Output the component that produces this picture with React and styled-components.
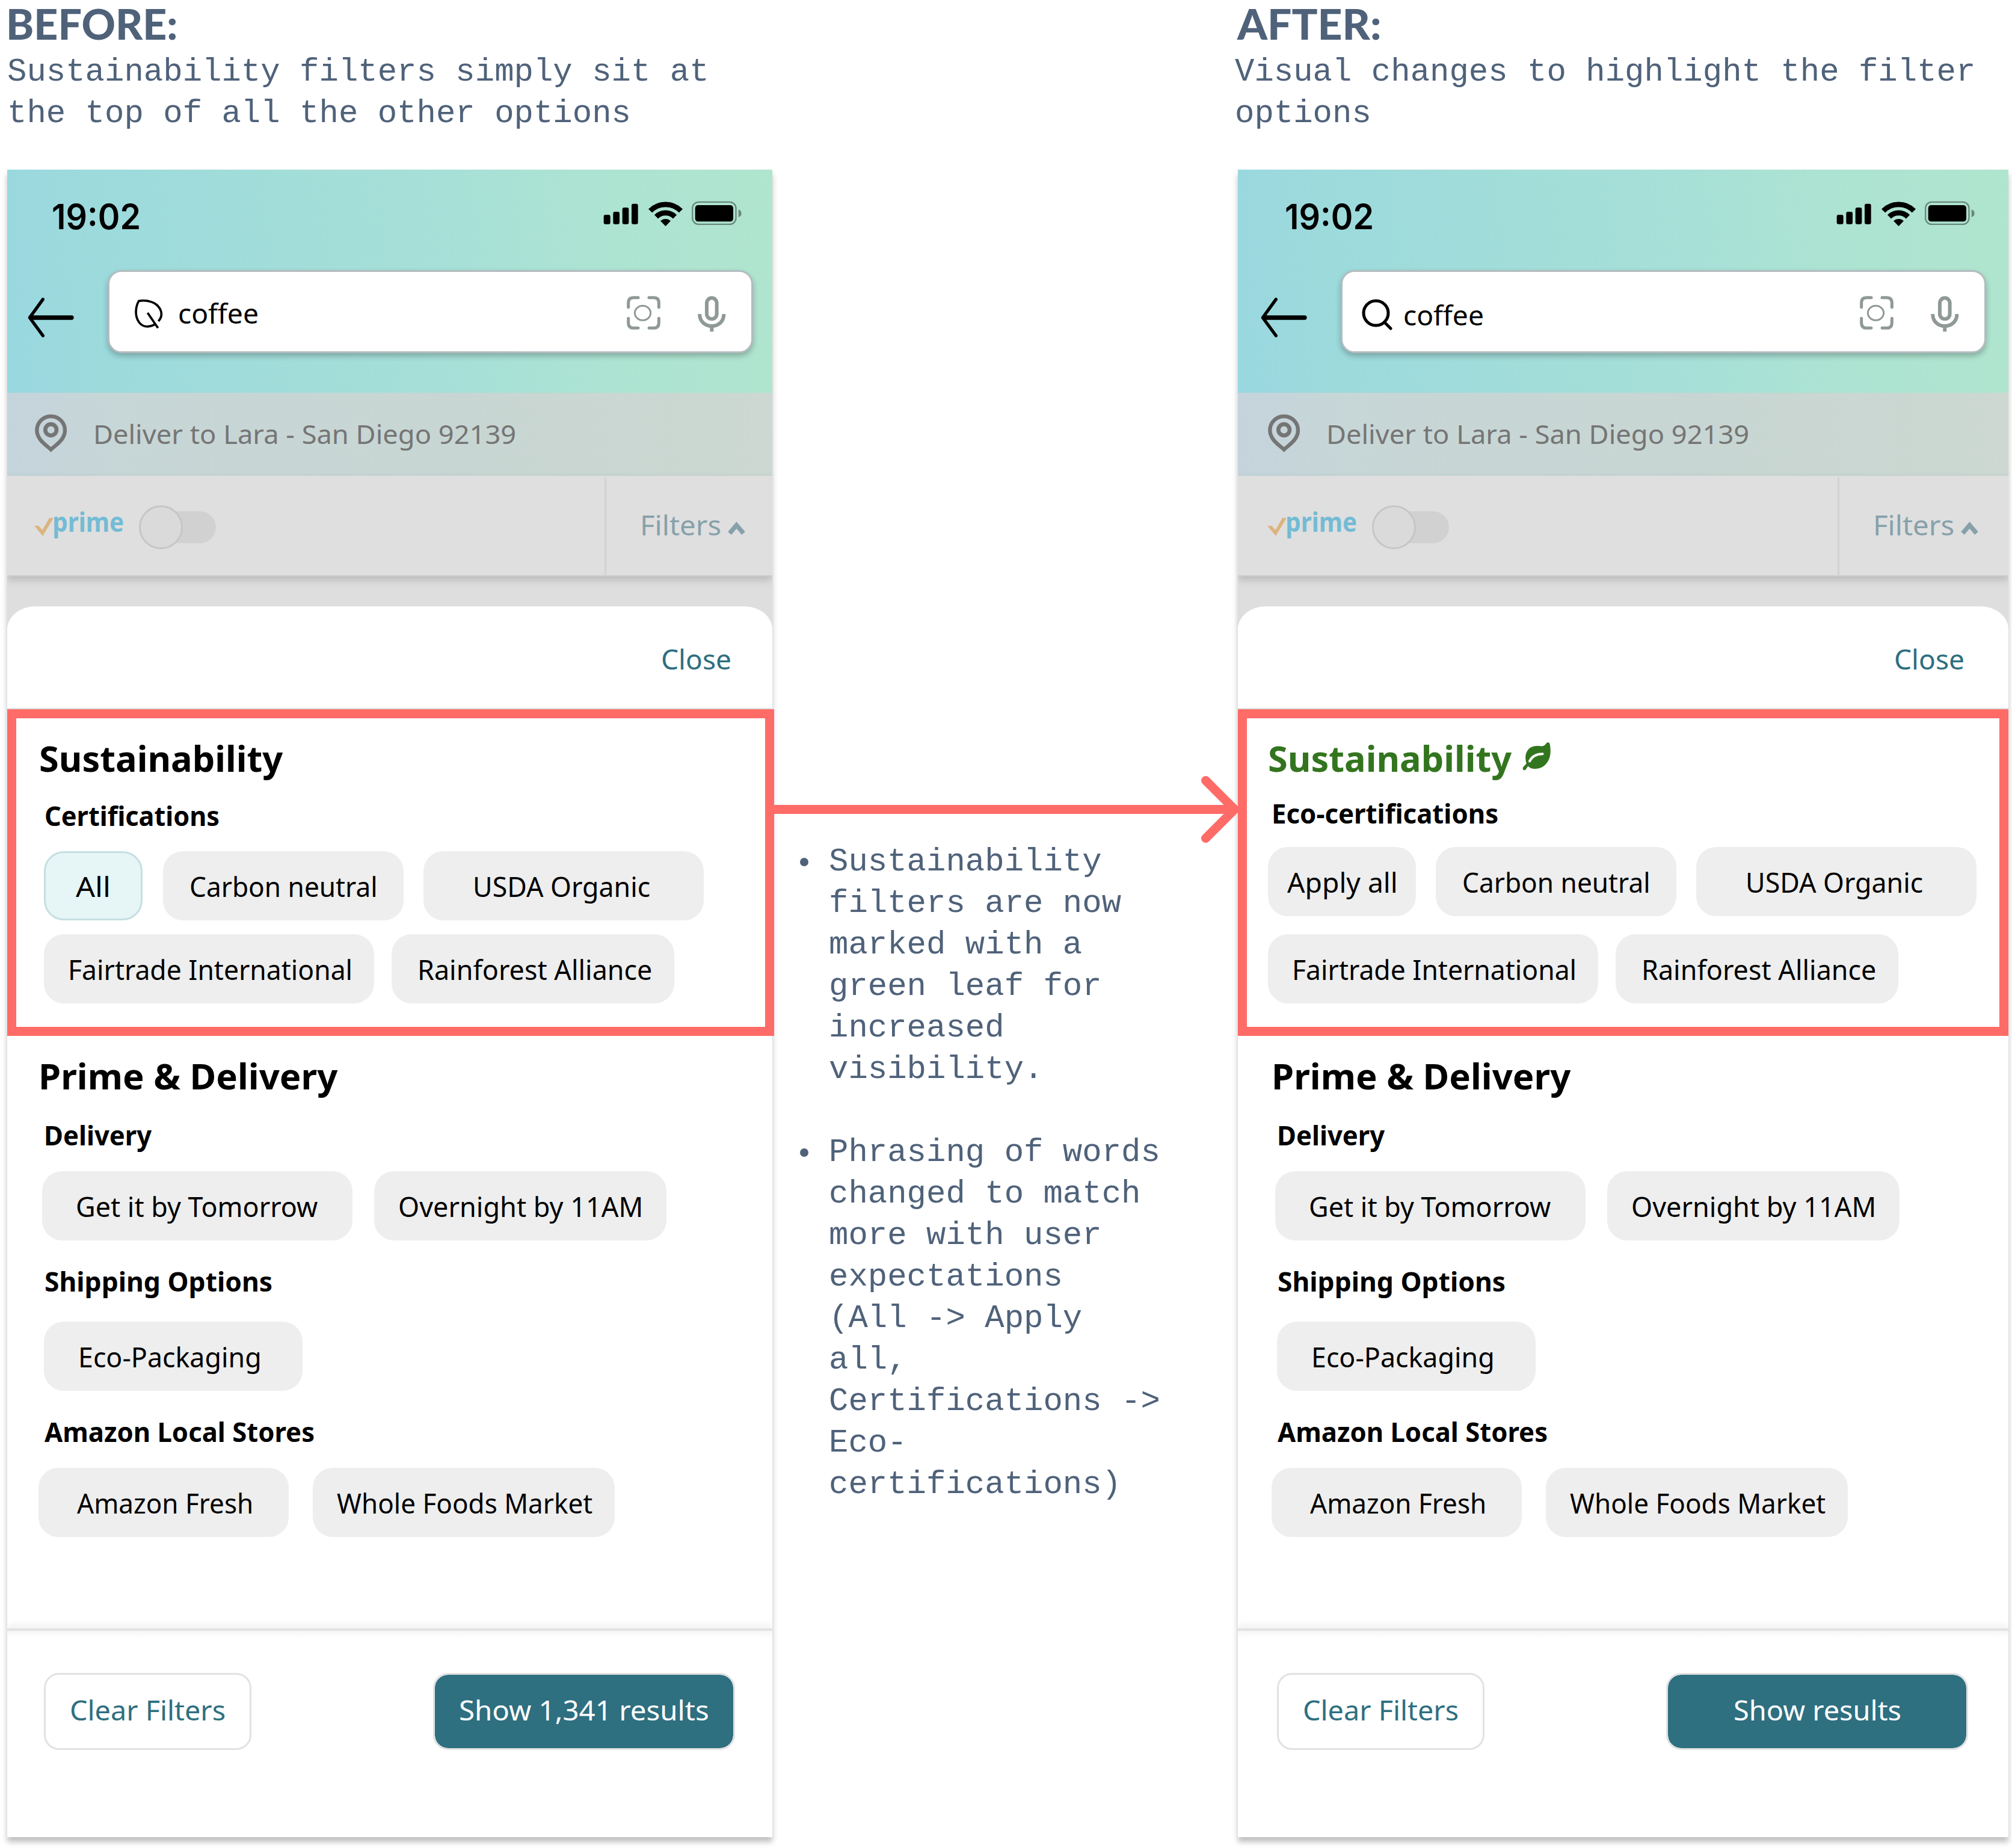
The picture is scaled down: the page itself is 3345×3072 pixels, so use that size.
import React, { useLayoutEffect, useRef, useState } from "react";
import styled, { createGlobalStyle, css } from "styled-components";

const UI_FONT = '"Noto Sans", "Open Sans", sans-serif';
const TEAL = "#2e6f80";
const SLATE = "#4f627a";
const CORAL = "#ff6b66";

const GlobalStyle = createGlobalStyle`
  *, *::before, *::after { box-sizing: border-box; }
  body { margin: 0; background: #fff; }
  svg { display: block; flex: none; }
`;

/* ---------- text that fills an exact width ---------- */

const FitBox = styled.span`
  display: block;
  flex: none;
  white-space: nowrap;
  overflow: visible;
`;

const FitInner = styled.span`
  display: inline-block;
  transform-origin: 0 0;
`;

function Fit({ width, children }) {
  const ref = useRef(null);
  const [fit, setFit] = useState({ shift: 0, scale: 1 });
  useLayoutEffect(() => {
    const s = getComputedStyle(ref.current);
    const ctx = document.createElement("canvas").getContext("2d");
    ctx.font = `${s.fontWeight} ${s.fontSize} ${s.fontFamily}`;
    const m = ctx.measureText(children);
    const scale = width / (m.actualBoundingBoxLeft + m.actualBoundingBoxRight);
    setFit({ scale, shift: m.actualBoundingBoxLeft * scale });
  }, [width, children]);
  return (
    <FitBox style={{ width }}>
      <FitInner ref={ref} style={{ transform: `translateX(${fit.shift}px) scaleX(${fit.scale})` }}>
        {children}
      </FitInner>
    </FitBox>
  );
}

/* ---------- board ---------- */

const Board = styled.main`
  display: flex;
  align-items: flex-start;
  width: 3345px;
  height: 3072px;
  padding-left: 12px;
  overflow: hidden;
  background: #fff;
`;

const Column = styled.section`
  flex: none;
  width: ${(p) => p.$width}px;
`;

const Intro = styled.header`
  height: 282px;
  margin-left: ${(p) => (p.$wide ? -5 : 0)}px;
  color: ${SLATE};
`;

const IntroTitle = styled.h1`
  margin: 0 0 7.500px 3px;
  font: 900 71px/77px Lato, sans-serif;
`;

const monoText = css`
  margin: 0;
  font: 400 54px/69px "Liberation Mono", monospace;
  color: ${SLATE};
  white-space: nowrap;
`;

const IntroText = styled.p`
  ${monoText}
`;

/* ---------- phone ---------- */

const Phone = styled.article`
  height: 2772px;
  background: #fff;
  font-family: ${UI_FONT};
  color: #000;
  box-shadow: 0 8px 9px rgba(0, 0, 0, 0.25);
`;

const Inset = styled.div`
  margin: ${(p) => (p.$wide ? "0 5px 0 4px" : "0")};
`;

const TopArea = styled.div`
  height: 371px;
  background: linear-gradient(83deg, #99d8e0 0%, #9ddadc 14%, #a7e0d7 60%, #ace3d2 76%, #b0e5cf 100%);
`;

const StatusBar = styled.div`
  display: flex;
  align-items: flex-start;
  justify-content: space-between;
  height: 167px;
  padding: 42.5px 50px 0 76px;
  font: 600 58px/70px Inter, sans-serif;
  svg { margin-top: 9.500px; }
`;

const SearchRow = styled.div`
  display: flex;
  align-items: flex-start;
  padding-left: 33px;
`;

const BackIcon = styled.svg`
  margin-top: 44px;
`;

const SearchBox = styled.div`
  display: flex;
  align-items: flex-start;
  width: 1073px;
  height: 138px;
  margin-left: 54px;
  border: 3px solid #b3bcbf;
  border-radius: 23px;
  background: #fff;
  box-shadow: 0 5px 10px rgba(0, 0, 0, 0.24);
`;

const Query = styled.div`
  margin: ${(p) => (p.$plain ? "41px 0 0 20px" : "37.5px 0 0 26px")};
  font-size: 46px;
  line-height: 60px;
`;

const BoxTools = styled.svg`
  margin: 38px 41px 0 auto;
`;

const DeliverBar = styled.div`
  height: 138px;
  background: linear-gradient(88deg, #c5d4dc 0%, #c6d5da 7%, #c7d6d6 14%, #c8d6d3 60%, #ccd8d1 100%);
  box-shadow: inset 0 -6px 6px -5px rgba(60, 110, 100, 0.08);
`;

const DeliverRow = styled.div`
  display: flex;
  padding: 36px 0 0 45.5px;
  gap: 48px;
  color: #757575;
  font-size: 44px;
  line-height: 60px;
  span { margin-top: 1px; }
`;

const FilterBar = styled.div`
  position: relative;
  height: 167px;
  background: #dfdfdf;
  border-bottom: 2px solid #d0d0d0;
  box-shadow: 0 6px 12px rgba(0, 0, 0, 0.17);
  clip-path: inset(0 0 -30px 0);
`;

const FilterRow = styled.div`
  display: flex;
  align-items: flex-start;
  padding-left: 45px;
`;

const CheckIcon = styled.svg`
  margin-top: 70px;
`;

const PrimeWord = styled.div`
  margin: 46px 0 0 1px;
  color: #74bbd4;
  font-weight: 700;
  font-size: 44px;
  line-height: 60px;
`;

const Toggle = styled.div`
  display: flex;
  align-items: center;
  margin: 49px 0 0 26px;
`;

const Knob = styled.span`
  z-index: 1;
  width: 73px;
  height: 73px;
  border: 3.5px solid #c6c6c6;
  border-radius: 50%;
  background: #dadada;
`;

const Track = styled.span`
  width: 92px;
  height: 53px;
  margin-left: -37px;
  border-radius: 0 27px 27px 0;
  background: #d1d1d1;
`;

const FiltersCell = styled.div`
  display: flex;
  align-items: flex-start;
  width: 279px;
  height: 163px;
  margin: 2px 0 0 auto;
  padding: 48.5px 0 0 59.500px;
  border-left: 3px solid #d2d2d2;
  color: #87a1aa;
  font-size: 46px;
  line-height: 60px;
  svg { margin: 24.500px 0 0 12px; }
`;

const Backdrop = styled.div`
  padding-top: 50px;
  background: linear-gradient(#dedede 100px, #fff 100px);
`;

const Sheet = styled.div`
  height: 1699px;
  border-radius: 46px 46px 0 0 / 38px 38px 0 0;
  background: #fff;
`;

const CloseRow = styled.div`
  display: flex;
  justify-content: flex-end;
  height: 171px;
  padding: 57px 70px 0 0;
  border-bottom: 2px solid #dfe2e2;
  color: ${TEAL};
  font-size: 46px;
  line-height: 60px;
`;

const Highlight = styled.section`
  position: relative;
  height: 543px;
  margin-right: ${(p) => (p.$wide ? 0 : -3)}px;
  border: 15px solid ${CORAL};
`;

const Heading = styled.h2`
  display: flex;
  align-items: flex-start;
  gap: 17px;
  margin: 26.2px 0 0 ${(p) => p.$left}px;
  color: ${(p) => (p.$green ? "#33751f" : "#000")};
  font-weight: 700;
  font-size: 60px;
  line-height: 80px;
  svg { margin-top: 13px; }
`;

const Label = styled.h3`
  margin: ${(p) => p.$top}px 0 0 ${(p) => p.$left}px;
  font-weight: 700;
  font-size: 44px;
  line-height: 60px;
`;

const ChipRow = styled.div`
  display: flex;
  gap: ${(p) => p.$gap}px;
  margin: ${(p) => p.$top}px 0 0 ${(p) => p.$left}px;
`;

const Chip = styled.div`
  width: ${(p) => p.$width}px;
  height: 115px;
  padding: 29px 0 0 ${(p) => p.$pad}px;
  border-radius: 33px;
  background: ${(p) => (p.$active ? "#e6f5f5" : "#eee")};
  box-shadow: ${(p) => (p.$active ? "inset 0 0 0 3px #c5dfe1" : "none")};
  font-size: 45px;
  line-height: 60px;
`;

const Footer = styled.footer`
  height: 345px;
  border-top: 4px solid #e2e2e2;
  background: linear-gradient(#f6f6f6, #fff 12px);
  box-shadow: 0 -5px 12px rgba(0, 0, 0, 0.07);
  clip-path: inset(-30px 0 0 0);
`;

const Actions = styled.div`
  display: flex;
  justify-content: space-between;
  padding: 70px 62px 0 61px;
`;

const Action = styled.div`
  display: flex;
  justify-content: center;
  width: ${(p) => (p.$primary ? 502 : 345)}px;
  height: 128px;
  padding-top: 28px;
  border: 3px solid #e2e2e2;
  border-radius: 25px;
  background: ${(p) => (p.$primary ? TEAL : "#fff")};
  background-clip: padding-box;
  color: ${(p) => (p.$primary ? "#fff" : TEAL)};
  font-size: 46px;
  line-height: 60px;
`;

/* ---------- notes ---------- */

const Notes = styled.aside`
  flex: none;
  width: 774px;
`;

const Arrow = styled.svg`
  position: relative;
  z-index: 2;
  margin: 1289px 0 0 3px;
  overflow: visible;
`;

const NoteList = styled.ul`
  display: flex;
  flex-direction: column;
  gap: 69px;
  margin: -3px 0 0;
  padding: 0;
  list-style: none;
`;

const Note = styled.li`
  ${monoText}
  display: flex;
  align-items: flex-start;
  gap: 34px;
  padding-left: 46px;
  &::before {
    content: "";
    width: 14px;
    height: 14px;
    margin-top: 28px;
    border-radius: 50%;
    background: ${SLATE};
  }
`;

/* ---------- icons ---------- */

const StatusIcons = () => (
  <svg width="230.7" height="42.7" viewBox="40 70 692 128">
    <rect x="42" y="139" width="33" height="47" rx="9" />
    <rect x="89" y="124" width="32" height="62" rx="9" />
    <rect x="135" y="103" width="32" height="83" rx="9" />
    <rect x="181" y="84" width="32" height="102" rx="9" />
    <g fill="none" stroke="#000" strokeWidth="26">
      <path d="M274.3 119.3A107 107 0 0 1 426.7 119.3" />
      <path d="M304 149A66 66 0 0 1 397 149" />
    </g>
    <path d="M350.500 196L325 170A37 37 0 0 1 376 170Z" />
    <rect x="484.500" y="75.500" width="217" height="111" rx="31" fill="none" stroke="#000" strokeOpacity=".4" strokeWidth="7" />
    <rect x="498" y="91" width="190" height="82" rx="15" />
    <path d="M714 113Q729 118 729 132T714 151Z" fillOpacity=".4" />
  </svg>
);

const LeafSearchIcon = () => (
  <svg width="50" height="53.3" viewBox="575 165 150 160" fill="none" stroke="#000" strokeWidth="11" style={{ margin: "43px 0 0 40px" }}>
    <path d="M699 282C715 264 718 244 709 224C690 186 643 174 601 181C583 214 581 258 603 288C622 313 653 314 684 297" strokeLinejoin="round" />
    <path d="M645 240L697 316" />
  </svg>
);

const SearchIcon = () => (
  <svg width="51" height="52" viewBox="0 0 51 52" fill="none" stroke="#000" strokeWidth="5" style={{ margin: "45px 0 0 32px" }}>
    <circle cx="23.500" cy="23.500" r="20.500" />
    <path d="M37.500 38.500L48 49" strokeLinecap="round" />
  </svg>
);

const ToolIcons = () => (
  <BoxTools width="168.3" height="63.3" viewBox="150 540 505 190" fill="none" stroke="#8f9996">
    <g strokeWidth="15" strokeLinecap="round">
      <path d="M164 602V580Q164 554 190 554H213" />
      <path d="M267 554H290Q316 554 316 580V602" />
      <path d="M316 658V680Q316 706 290 706H267" />
      <path d="M213 706H190Q164 706 164 680V658" />
    </g>
    <ellipse cx="235.500" cy="631" rx="39.500" ry="36" strokeWidth="9" />
    <g strokeWidth="18">
      <rect x="555" y="556" width="50" height="105" rx="25" />
      <path d="M519.500 636C519.500 716 640.500 716 640.500 636" />
      <path d="M580 694V724" />
    </g>
  </BoxTools>
);

const PinIcon = () => (
  <svg width="53.3" height="62.7" viewBox="83 747 160 188" fill="none" stroke="#757575">
    <path d="M163 922C140 900 93 873 93 826A70 70 0 0 1 233 826C233 873 186 900 163 922Z" strokeWidth="19" />
    <circle cx="163" cy="823.500" r="28" strokeWidth="20" />
  </svg>
);

const LeafIcon = () => (
  <svg width="48" height="48" viewBox="91 99 144 144">
    <path
      fill="#33751f"
      d="M218 102Q225 101 228 110C233 137 233 168 222 190C208 219 184 234 155 234C138 234 128 229 120 221C115 225 113 229 109 236C104 244 94 242 93 233C92 227 99 220 107 213L111 207C103 181 105 151 125 133C142 118 160 119 181 121C200 123 205 114 211 106Z"
    />
    <path d="M127 196C140 171 160 160 192 160" fill="none" stroke="#fff" strokeWidth="12" strokeLinecap="round" />
  </svg>
);

/* ---------- data ---------- */

const chip = (label, width, pad, text, active) => ({ label, width, pad, text, active });

const SHARED = {
  carbon: chip("Carbon neutral", 400, 46, 307),
  usda: chip("USDA Organic", 466, 85.5, 290.5),
  fairtrade: chip("Fairtrade International", 549, 44, 465.5),
  rainforest: chip("Rainforest Alliance", 469.5, 47, 385),
};

const DELIVERY_GROUPS = [
  {
    title: "Delivery", width: 177, top: 29.1, left: 64, rowTop: 29.7, rowLeft: 58, gap: 36,
    chips: [chip("Get it by Tomorrow", 516, 58, 400), chip("Overnight by 11AM", 486, 41.5, 401.5)],
  },
  {
    title: "Shipping Options", width: 376, top: 38, left: 64, rowTop: 37, rowLeft: 61, gap: 0,
    chips: [chip("Eco-Packaging", 430, 60.5, 297)],
  },
  {
    title: "Amazon Local Stores", width: 448, top: 38, left: 62, rowTop: 30, rowLeft: 52, gap: 40,
    chips: [chip("Amazon Fresh", 416, 63.5, 290.5), chip("Whole Foods Market", 502, 40, 425)],
  },
];

const BEFORE = {
  wide: false,
  certification: { title: "Certifications", width: 288, top: 25.5, left: 49 },
  heading: { left: 39.5, width: 404 },
  rows: [
    { top: 29.3, left: 46, gap: 33.5, chips: [chip("All", 164, 53, 54, true), SHARED.carbon, SHARED.usda] },
    { top: 23, left: 46, gap: 29, chips: [SHARED.fairtrade, SHARED.rainforest] },
  ],
  submit: { label: "Show 1,341 results", width: 411.5 },
};

const AFTER = {
  wide: true,
  certification: { title: "Eco-certifications", width: 373, top: 22.2, left: 44 },
  heading: { left: 37, width: 404, leaf: true },
  rows: [
    { top: 26, left: 35, gap: 33, chips: [chip("Apply all", 246, 32, 180), SHARED.carbon, SHARED.usda] },
    { top: 29.5, left: 35, gap: 29, chips: [SHARED.fairtrade, SHARED.rainforest] },
  ],
  submit: { label: "Show results", width: 275 },
};

/* ---------- screens ---------- */

const Chips = ({ top, left, gap, chips }) => (
  <ChipRow $top={top} $left={left} $gap={gap}>
    {chips.map((c) => (
      <Chip key={c.label} $width={c.width} $pad={c.pad} $active={c.active}>
        <Fit width={c.text}>{c.label}</Fit>
      </Chip>
    ))}
  </ChipRow>
);

function FilterScreen({ screen }) {
  const { wide, heading, certification, rows, submit } = screen;
  return (
    <Phone>
      <TopArea>
        <Inset $wide={wide}>
          <StatusBar>
            <Fit width={143}>19:02</Fit>
            <StatusIcons />
          </StatusBar>
          <SearchRow>
            <BackIcon width="80" height="70" viewBox="45 160 240 210" fill="none" stroke="#000" strokeLinecap="round" strokeLinejoin="round">
              <path d="M124 174L58 265L124 355" strokeWidth="16" />
              <path d="M64 265H267" strokeWidth="22" />
            </BackIcon>
            <SearchBox>
              {wide ? <SearchIcon /> : <LeafSearchIcon />}
              <Query $plain={wide}>
                <Fit width={130}>coffee</Fit>
              </Query>
              <ToolIcons />
            </SearchBox>
          </SearchRow>
        </Inset>
      </TopArea>
      <DeliverBar>
        <Inset $wide={wide}>
          <DeliverRow>
            <PinIcon />
            <Fit width={697}>Deliver to Lara - San Diego 92139</Fit>
          </DeliverRow>
        </Inset>
      </DeliverBar>
      <FilterBar>
        <Inset $wide={wide}>
          <FilterRow>
            <CheckIcon width="32" height="30" viewBox="0 0 32 30">
              <path d="M0 13H7L13.500 20L25 0H32L14 30Z" fill="#dcb480" />
            </CheckIcon>
            <PrimeWord>
              <Fit width={115}>prime</Fit>
            </PrimeWord>
            <Toggle>
              <Knob />
              <Track />
            </Toggle>
            <FiltersCell>
              <Fit width={129}>Filters</Fit>
              <svg width="31" height="24" viewBox="0 0 31 24">
                <path d="M4 20.500L15.500 7L27 20.500" fill="none" stroke="#87a1aa" strokeWidth="7.500" />
              </svg>
            </FiltersCell>
          </FilterRow>
        </Inset>
      </FilterBar>
      <Backdrop>
        <Sheet>
          <CloseRow>
            <Inset $wide={wide}>
              <Fit width={113}>Close</Fit>
            </Inset>
          </CloseRow>
          <Highlight $wide={wide}>
            <Heading $left={heading.left} $green={heading.leaf}>
              <Fit width={heading.width}>Sustainability</Fit>
              {heading.leaf && <LeafIcon />}
            </Heading>
            <Label $top={certification.top} $left={certification.left}>
              <Fit width={certification.width}>{certification.title}</Fit>
            </Label>
            {rows.map((row) => (
              <Chips key={row.chips[0].label} {...row} />
            ))}
          </Highlight>
          <Inset $wide={wide}>
            <Heading $left={56.5}>
              <Fit width={493}>{"Prime & Delivery"}</Fit>
            </Heading>
            {DELIVERY_GROUPS.map((g) => (
              <React.Fragment key={g.title}>
                <Label $top={g.top} $left={g.left}>
                  <Fit width={g.width}>{g.title}</Fit>
                </Label>
                <Chips top={g.rowTop} left={g.rowLeft} gap={g.gap} chips={g.chips} />
              </React.Fragment>
            ))}
          </Inset>
        </Sheet>
      </Backdrop>
      <Footer>
        <Inset $wide={wide}>
          <Actions>
            <Action>
              <Fit width={255}>Clear Filters</Fit>
            </Action>
            <Action $primary>
              <Fit width={submit.width}>{submit.label}</Fit>
            </Action>
          </Actions>
        </Inset>
      </Footer>
    </Phone>
  );
}

export default function App() {
  return (
    <>
      <GlobalStyle />
      <Board>
        <Column $width={1272}>
          <Intro>
            <IntroTitle>
              <Fit width={278}>BEFORE:</Fit>
            </IntroTitle>
            <IntroText>
              Sustainability filters simply sit at
              <br />
              the top of all the other options
            </IntroText>
          </Intro>
          <FilterScreen screen={BEFORE} />
        </Column>
        <Notes>
          <Arrow width="774" height="112" viewBox="0 0 774 112" fill="none" stroke={CORAL} strokeWidth="15">
            <path d="M0 56.500H764" />
            <path d="M717.500 8.500L765.500 56.500L717.500 104.500" strokeLinecap="round" strokeLinejoin="round" />
          </Arrow>
          <NoteList>
            <Note>
              <div>
                Sustainability
                <br />
                filters are now
                <br />
                marked with a
                <br />
                green leaf for
                <br />
                increased
                <br />
                visibility.
              </div>
            </Note>
            <Note>
              <div>
                Phrasing of words
                <br />
                changed to match
                <br />
                more with user
                <br />
                expectations
                <br />
                {"(All -> Apply"}
                <br />
                all,
                <br />
                {"Certifications ->"}
                <br />
                Eco-
                <br />
                certifications)
              </div>
            </Note>
          </NoteList>
        </Notes>
        <Column $width={1281}>
          <Intro $wide>
            <IntroTitle>
              <Fit width={238}>AFTER:</Fit>
            </IntroTitle>
            <IntroText>
              Visual changes to highlight the filter
              <br />
              options
            </IntroText>
          </Intro>
          <FilterScreen screen={AFTER} />
        </Column>
      </Board>
    </>
  );
}
